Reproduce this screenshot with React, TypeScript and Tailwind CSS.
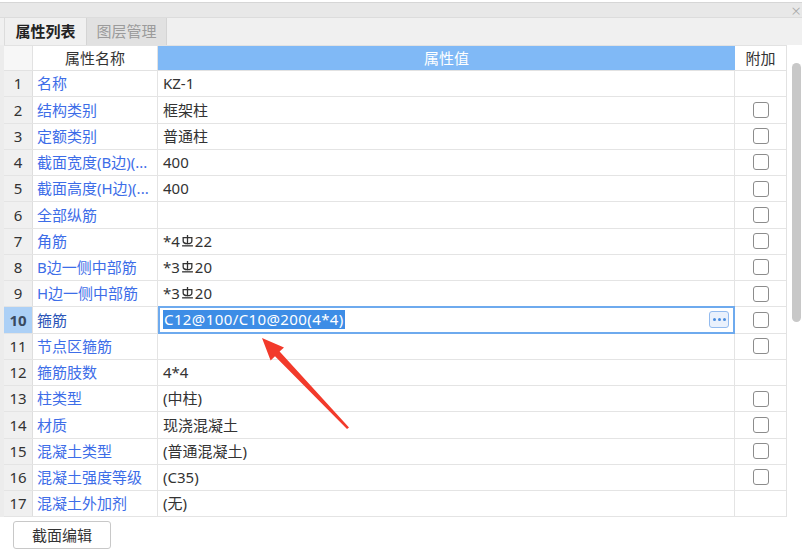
import React from 'react';

interface Row {
  id: number;
  name: string;
  value: React.ReactNode;
  check: boolean;
}

// HRB400 steel grade mark, drawn as a small glyph
const Steel: React.FC = () => (
  <svg width="13" height="13" viewBox="0 0 12 12" className="inline-block align-[3px] mx-[1px]">
    <path d="M2 2.5 h8 v3 a4 2.5 0 0 1 -8 0 z" fill="none" stroke="#333" strokeWidth="1.2" />
    <path d="M6 0 v8.5" stroke="#333" strokeWidth="1.2" />
    <path d="M1 10 h10" stroke="#333" strokeWidth="1.2" />
  </svg>
);

const rows: Row[] = [
  { id: 1, name: '名称', value: 'KZ-1', check: false },
  { id: 2, name: '结构类别', value: '框架柱', check: true },
  { id: 3, name: '定额类别', value: '普通柱', check: true },
  { id: 4, name: '截面宽度(B边)(...', value: '400', check: true },
  { id: 5, name: '截面高度(H边)(...', value: '400', check: true },
  { id: 6, name: '全部纵筋', value: '', check: true },
  { id: 7, name: '角筋', value: <>*4<Steel />22</>, check: true },
  { id: 8, name: 'B边一侧中部筋', value: <>*3<Steel />20</>, check: true },
  { id: 9, name: 'H边一侧中部筋', value: <>*3<Steel />20</>, check: true },
  { id: 10, name: '箍筋', value: '', check: true },
  { id: 11, name: '节点区箍筋', value: '', check: true },
  { id: 12, name: '箍筋肢数', value: '4*4', check: false },
  { id: 13, name: '柱类型', value: '(中柱)', check: true },
  { id: 14, name: '材质', value: '现浇混凝土', check: true },
  { id: 15, name: '混凝土类型', value: '(普通混凝土)', check: true },
  { id: 16, name: '混凝土强度等级', value: '(C35)', check: true },
  { id: 17, name: '混凝土外加剂', value: '(无)', check: false },
];

const Checkbox: React.FC = () => (
  <div className="w-[16px] h-[16px] border border-[#8c8c8c] rounded-[3px] bg-white" />
);

const App: React.FC = () => {
  return (
    <div
      className="relative w-[802px] h-[551px] bg-white overflow-hidden text-[15px] text-[#333]"
      style={{ fontFamily: '"Noto Sans", "Noto Sans CJK SC", sans-serif' }}
    >
      {/* title strip */}
      <div className="h-[2px] bg-white" />
      <div className="h-[15px] bg-[#e8e8e8] border-t border-[#d6d6d6] flex justify-end items-center pr-[1px]">
        <span className="text-[17px] leading-none font-light text-[#a8a8a8]">×</span>
      </div>

      {/* tabs */}
      <div className="h-[28px] bg-[#f0f0f0] border-t border-[#dcdcdc] flex pl-[4px]">
        <div className="w-[82px] flex items-center justify-center font-bold text-[#222] border-l border-[#dcdcdc]">
          属性列表
        </div>
        <div className="w-[81px] flex items-center justify-center bg-[#e1e1e1] text-[#9b9b9b] border-x border-[#d4d4d4]">
          图层管理
        </div>
      </div>

      <div className="flex bg-[#ececec]">
        <div className="ml-[4px] w-[782px] bg-white">
          {/* header */}
          <div className="flex h-[26px] border-y border-[#e2e2e2]">
            <div className="w-[29px] bg-[#f7f7f7] border-r border-[#e2e2e2]" />
            <div className="w-[125px] flex items-center justify-center border-r border-[#e2e2e2]">属性名称</div>
            <div className="w-[577px] flex items-center justify-center bg-[#80b9f6] text-white">属性值</div>
            <div className="w-[51px] flex items-center justify-center">附加</div>
          </div>

          {rows.map((r) => {
            const active = r.id === 10;
            return (
              <div key={r.id} className="flex h-[26.25px] border-b border-[#e4e4e4]">
                <div
                  className={`w-[29px] flex items-center justify-center border-r border-[#dedede] ${
                    active ? 'bg-[#acd0f6] font-bold text-[#3a4a60]' : 'bg-[#f0f0f0] text-[#333]'
                  }`}
                >
                  {r.id}
                </div>
                <div
                  className={`w-[125px] flex items-center pl-[4px] whitespace-nowrap overflow-hidden border-r border-[#e4e4e4] ${
                    active ? 'text-[#2b55b8]' : 'text-[#3d6de8]'
                  }`}
                >
                  {r.name}
                </div>
                {active ? (
                  <div className="w-[577px] flex items-center justify-between border-2 border-[#6eaaee] pl-[3px] pr-[4px] -my-[1px]">
                    <span className="bg-[#3d8de6] text-white leading-[19px] px-[1px] tracking-[0.4px]">
                      C12@100/C10@200(4*4)
                    </span>
                    <div className="w-[20px] h-[17px] rounded-[3px] border border-[#93bbef] bg-[#eaf1fc] flex items-center justify-center gap-[2px]">
                      <span className="w-[3px] h-[3px] rounded-full bg-[#4a8de0]" />
                      <span className="w-[3px] h-[3px] rounded-full bg-[#4a8de0]" />
                      <span className="w-[3px] h-[3px] rounded-full bg-[#4a8de0]" />
                    </div>
                  </div>
                ) : (
                  <div className="w-[577px] flex items-center pl-[5px] whitespace-nowrap border-r border-[#e4e4e4]">
                    {r.value}
                  </div>
                )}
                <div className="w-[51px] flex items-center justify-center">
                  {r.check && <Checkbox />}
                </div>
              </div>
            );
          })}
        </div>

        {/* scrollbar */}
        <div className="w-[16px] bg-white border-l border-[#e2e2e2] pt-[18px] pl-[5px]">
          <div className="w-[9px] h-[259px] rounded-full bg-[#c8c8c8]" />
        </div>
      </div>

      {/* bottom */}
      <div className="pt-[4px] pl-[13px]">
        <button className="w-[98px] h-[28px] border border-[#c8c8c8] rounded-[3px] bg-white text-[#333]">
          截面编辑
        </button>
      </div>

      {/* annotation arrow */}
      <svg className="absolute left-0 top-0 pointer-events-none" width="802" height="551">
        <polygon
          points="262,338 284,347.5 279.6,351.6 349,427.4 347,429 275,356.2 270.6,360.4"
          fill="#f23a2b"
        />
      </svg>
    </div>
  );
};

export default App;
